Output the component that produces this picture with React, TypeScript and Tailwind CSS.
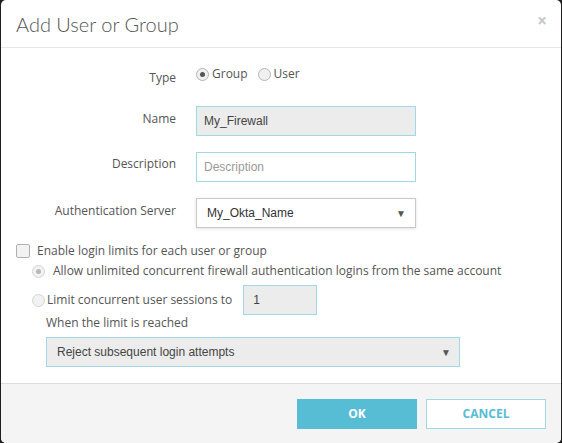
import React, { useState } from "react";

const label = "text-[12px] text-[#555] text-right w-[195px] shrink-0 pr-[20px]";
const inputBase =
  "h-[30px] border border-[#9fd9e4] text-[12px] text-[#444] outline-none";
const arial = { fontFamily: "'Liberation Sans', Arial, sans-serif" };

function Radio({ checked, dim }: { checked?: boolean; dim?: boolean }) {
  return (
    <span
      className={`relative inline-flex h-[13px] w-[13px] shrink-0 items-center justify-center rounded-full border ${
        dim ? "border-[#d4d4d4] bg-[#f2f2f2]" : "border-[#b5b5b5] bg-[#f0f0f0]"
      }`}
    >
      {checked && (
        <span className={`h-[5px] w-[5px] rounded-full ${dim ? "bg-[#b8b8b8]" : "bg-[#555]"}`} />
      )}
    </span>
  );
}

function Caret() {
  return <span className="text-[10px] text-[#555]">▼</span>;
}

export default function App() {
  const [type, setType] = useState("group");

  return (
    <div
      className="h-[443px] w-[562px] bg-[#1f1f1f] px-px"
      style={{ fontFamily: "'Open Sans', sans-serif" }}
    >
      <div className="flex h-full flex-col overflow-hidden rounded-[5px] bg-white">
        {/* header */}
        <div className="relative flex h-[48px] shrink-0 items-center border-b border-[#e6e6e6] pl-[15px]">
          <h3 className="text-[20px] font-light text-[#555]" style={{ fontFamily: "Lato, sans-serif" }}>
            Add User or Group
          </h3>
          <span className="absolute right-[14px] top-[8px] text-[17px] font-bold text-[#c8c8c8]">×</span>
        </div>

        {/* body */}
        <div className="flex-1 pt-[14px] text-[12px] text-[#555]">
          <div className="flex h-[24px] items-center">
            <div className={label + " pt-[8px]"}>Type</div>
            <label className="flex items-center gap-[3px]" onClick={() => setType("group")}>
              <Radio checked={type === "group"} />
              Group
            </label>
            <label className="ml-[10px] flex items-center gap-[3px]" onClick={() => setType("user")}>
              <Radio checked={type === "user"} />
              User
            </label>
          </div>

          <div className="mt-[20px] flex items-center">
            <div className={label + " -mt-[4px]"}>Name</div>
            <input
              className={inputBase + " w-[220px] bg-[#ececec] px-[7px]"}
              style={arial}
              defaultValue="My_Firewall"
            />
          </div>

          <div className="mt-[16px] flex items-center">
            <div className={label + " -mt-[6px]"}>Description</div>
            <input
              className={inputBase + " w-[220px] bg-white px-[7px] placeholder-[#9a9a9a]"}
              style={arial}
              placeholder="Description"
            />
          </div>

          <div className="mt-[16px] flex items-center">
            <div className={label + " -mt-[4px]"}>Authentication Server</div>
            <div
              className="flex h-[30px] w-[220px] items-center justify-between border border-[#c9c9c9] bg-white pl-[10px] pr-[9px] text-[#333] shadow-[0_1px_3px_rgba(0,0,0,0.12)]"
              style={arial}
            >
              My_Okta_Name
              <Caret />
            </div>
          </div>

          <div className="mt-[14px] flex h-[18px] items-center gap-[7px] pl-[15px]">
            <span className="h-[14px] w-[14px] rounded-[2px] border border-[#b0b0b0] bg-[#f2f2f2]" />
            Enable login limits for each user or group
          </div>

          <div className="mt-[2px] flex h-[18px] items-center gap-[8px] pl-[31px]">
            <Radio checked dim />
            Allow unlimited concurrent firewall authentication logins from the same account
          </div>

          <div className="mt-[5px] flex items-center pl-[31px]">
            <Radio dim />
            <span className="ml-[2px]">Limit concurrent user sessions to</span>
            <input
              className={inputBase + " ml-[11px] w-[74px] bg-[#ececec] px-[9px]"}
              style={arial}
              defaultValue="1"
            />
          </div>

          <div className="-mt-[1px] h-[18px] pl-[45px]">When the limit is reached</div>

          <div
            className="ml-[45px] mt-[5px] flex h-[30px] w-[414px] items-center justify-between border border-[#9fd9e4] bg-[#ececec] pl-[10px] pr-[8px] text-[#444]"
            style={arial}
          >
            Reject subsequent login attempts
            <Caret />
          </div>
        </div>

        {/* footer */}
        <div className="flex h-[60px] shrink-0 items-center justify-end gap-[9px] border-t border-[#dcdcdc] bg-[#f4f4f4] pr-[15px] pt-[1px]">
          <button className="h-[30px] w-[120px] bg-[#56bdd4] text-[12px] font-bold text-white">OK</button>
          <button className="h-[30px] w-[120px] border border-[#9fd9e4] bg-white text-[12px] font-bold text-[#56bdd4]">
            CANCEL
          </button>
        </div>
      </div>
    </div>
  );
}
